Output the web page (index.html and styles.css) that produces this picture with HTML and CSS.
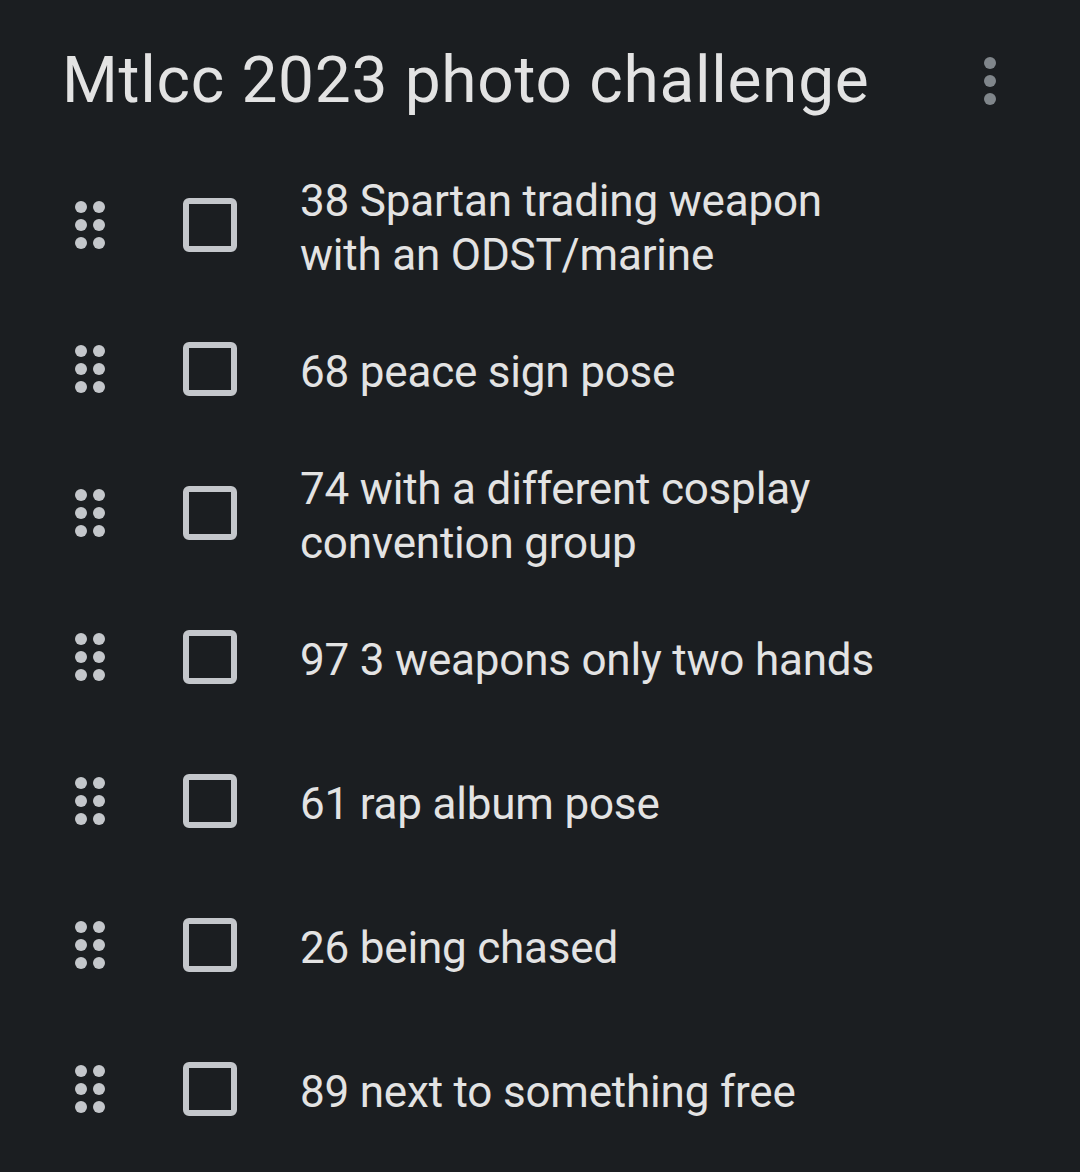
FILE: index.html
```html
<!DOCTYPE html>
<html>
<head>
	<meta charset="utf-8">
	<title>Mtlcc 2023 photo challenge</title>
	<link rel="stylesheet" href="styles.css">
</head>
<body>
	<div class="header">
		<h1 class="title">Mtlcc 2023 photo challenge</h1>
		<svg class="more" width="12" height="48" viewBox="0 0 12 48"><circle cx="6" cy="6" r="6"/><circle cx="6" cy="24" r="6"/><circle cx="6" cy="42" r="6"/></svg>
	</div>
	<ul class="list">
		<li class="item">
			<svg class="handle" width="30" height="48" viewBox="0 0 30 48"><circle cx="6" cy="6" r="6"/><circle cx="24" cy="6" r="6"/><circle cx="6" cy="24" r="6"/><circle cx="24" cy="24" r="6"/><circle cx="6" cy="42" r="6"/><circle cx="24" cy="42" r="6"/></svg>
			<span class="check"></span>
			<span class="text">38 Spartan trading weapon with an ODST/marine</span>
		</li>
		<li class="item">
			<svg class="handle" width="30" height="48" viewBox="0 0 30 48"><circle cx="6" cy="6" r="6"/><circle cx="24" cy="6" r="6"/><circle cx="6" cy="24" r="6"/><circle cx="24" cy="24" r="6"/><circle cx="6" cy="42" r="6"/><circle cx="24" cy="42" r="6"/></svg>
			<span class="check"></span>
			<span class="text">68 peace sign pose</span>
		</li>
		<li class="item">
			<svg class="handle" width="30" height="48" viewBox="0 0 30 48"><circle cx="6" cy="6" r="6"/><circle cx="24" cy="6" r="6"/><circle cx="6" cy="24" r="6"/><circle cx="24" cy="24" r="6"/><circle cx="6" cy="42" r="6"/><circle cx="24" cy="42" r="6"/></svg>
			<span class="check"></span>
			<span class="text">74 with a different cosplay convention group</span>
		</li>
		<li class="item">
			<svg class="handle" width="30" height="48" viewBox="0 0 30 48"><circle cx="6" cy="6" r="6"/><circle cx="24" cy="6" r="6"/><circle cx="6" cy="24" r="6"/><circle cx="24" cy="24" r="6"/><circle cx="6" cy="42" r="6"/><circle cx="24" cy="42" r="6"/></svg>
			<span class="check"></span>
			<span class="text">97 3 weapons only two hands</span>
		</li>
		<li class="item">
			<svg class="handle" width="30" height="48" viewBox="0 0 30 48"><circle cx="6" cy="6" r="6"/><circle cx="24" cy="6" r="6"/><circle cx="6" cy="24" r="6"/><circle cx="24" cy="24" r="6"/><circle cx="6" cy="42" r="6"/><circle cx="24" cy="42" r="6"/></svg>
			<span class="check"></span>
			<span class="text">61 rap album pose</span>
		</li>
		<li class="item">
			<svg class="handle" width="30" height="48" viewBox="0 0 30 48"><circle cx="6" cy="6" r="6"/><circle cx="24" cy="6" r="6"/><circle cx="6" cy="24" r="6"/><circle cx="24" cy="24" r="6"/><circle cx="6" cy="42" r="6"/><circle cx="24" cy="42" r="6"/></svg>
			<span class="check"></span>
			<span class="text">26 being chased</span>
		</li>
		<li class="item">
			<svg class="handle" width="30" height="48" viewBox="0 0 30 48"><circle cx="6" cy="6" r="6"/><circle cx="24" cy="6" r="6"/><circle cx="6" cy="24" r="6"/><circle cx="24" cy="24" r="6"/><circle cx="6" cy="42" r="6"/><circle cx="24" cy="42" r="6"/></svg>
			<span class="check"></span>
			<span class="text">89 next to something free</span>
		</li>
	</ul>
</body>
</html>
```

FILE: styles.css
```css
html,body{margin: 0;padding: 0;}
body{background: #1b1e21;color: #e3e3e3;font-family: Roboto, "Noto Sans", sans-serif;height: 1172px;overflow: hidden;}
.header{display: flex;align-items: center;justify-content: space-between;box-sizing: border-box;height: 156px;padding: 6px 84px 0 62px;}
.title{margin: 0;font-size: 64px;font-weight: 400;line-height: 1;letter-spacing: 0.7px;color: #e3e3e3;}
.more{fill: #80868b;flex: none;}
.list{list-style: none;margin: 0;padding: 0;}
.item{display: flex;align-items: center;height: 144px;padding-left: 75px;}
.handle{fill: #c4c7cb;flex: none;margin-bottom: 6px;}
.check{flex: none;box-sizing: border-box;width: 54px;height: 54px;border: 6px solid #c4c7cb;border-radius: 6px;margin: 0 0 6px 78px;}
.text{width: 600px;margin-left: 63px;font-size: 44px;line-height: 54px;letter-spacing: -0.2px;}
```
